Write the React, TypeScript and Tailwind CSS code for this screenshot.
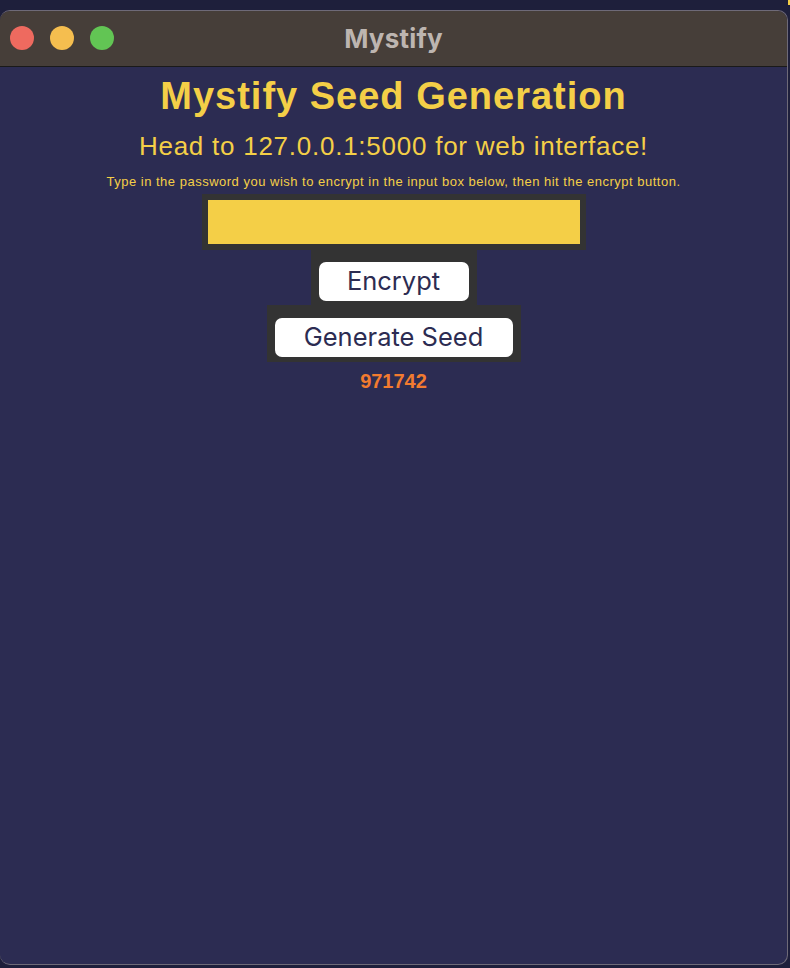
import React from "react";

export default function App() {
  return (
    <div className="w-[790px] h-[968px] bg-[#1e1f3b] pt-[10px] pr-[2px] pb-[3px] flex flex-col relative">
      <div className="absolute right-0 top-0 w-[2px] h-[5px] bg-[#f4cf47]" />
      <div className="flex-1 flex flex-col rounded-[10px] overflow-hidden border-t border-b border-r border-[#6e6a78] bg-[#2c2c52]">
        <div className="h-[56px] shrink-0 bg-[#463e39] border-b border-[#1a1a1a] relative flex items-center justify-center">
          <div className="absolute left-[10px] top-[15px] flex gap-[16px]">
            <div className="w-[24px] h-[24px] rounded-full bg-[#ee6a5f]" />
            <div className="w-[24px] h-[24px] rounded-full bg-[#f5be4f]" />
            <div className="w-[24px] h-[24px] rounded-full bg-[#62c554]" />
          </div>
          <span className="text-[26px] font-bold text-[#bdb5b0] tracking-[0.2px]" style={{ fontFamily: "Inter, Roboto, sans-serif" }}>
            Mystify
          </span>
        </div>
        <div className="flex-1 flex flex-col items-center" style={{ fontFamily: '"Liberation Sans", Arial, sans-serif' }}>
          <h1 className="mt-[6px] text-[38px] leading-[46px] font-bold tracking-[1px] text-[#f4cf47]">Mystify Seed Generation</h1>
          <p className="mt-[12px] text-[26px] leading-[30px] tracking-[0.75px] text-[#f4cf47]">Head to 127.0.0.1:5000 for web interface!</p>
          <p className="mt-[13px] text-[13px] leading-[16px] tracking-[0.5px] text-[#f4cf47]">
            Type in the password you wish to encrypt in the input box below, then hit the encrypt button.
          </p>
          <div className="mt-[4px] w-[384px] h-[56px] bg-[#333333] p-[6px]">
            <div className="w-full h-full bg-[#f4cf47]" />
          </div>
          <div className="w-[166px] h-[55px] bg-[#333333] pt-[12px] px-[8px]">
            <div className="h-[39px] rounded-[7px] bg-white flex items-center justify-center text-[25.5px] text-[#2c2c52]" style={{ fontFamily: "Inter, sans-serif" }}>
              Encrypt
            </div>
          </div>
          <div className="w-[254px] h-[57px] bg-[#333333] pt-[13px] px-[8px]">
            <div className="h-[39px] rounded-[7px] bg-white flex items-center justify-center text-[25.5px] text-[#2c2c52]" style={{ fontFamily: "Inter, sans-serif" }}>
              Generate Seed
            </div>
          </div>
          <p className="mt-[8px] text-[20px] leading-[22px] font-bold text-[#f27b2f]">971742</p>
        </div>
      </div>
    </div>
  );
}
